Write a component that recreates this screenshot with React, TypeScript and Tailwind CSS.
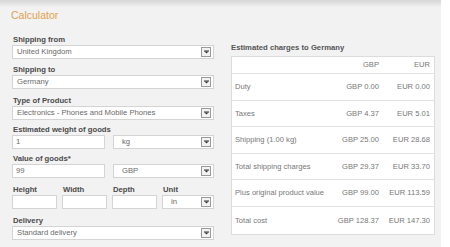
import type { ReactNode } from 'react';

const FONT = { fontFamily: '"Liberation Sans", Arial, sans-serif' };

const Arrow = () => (
    <span className="absolute right-[2px] top-[1px] w-[10px] h-[10px] border border-[#9a9a9a] bg-[#f2f2f2] flex items-center justify-center">
        <svg width="5" height="4" viewBox="0 0 5 4">
            <rect x="0" y="0.5" width="5" height="1" fill="#333" />
            <path d="M0.5 1.5 L4.5 1.5 L2.5 3.6 Z" fill="#333" />
        </svg>
    </span>
);

const Select = ({ value, className = '' }: { value: string; className?: string }) => (
    <div className={`relative h-[14px] bg-white border border-[#d4d4d4] text-[7.7px] leading-[12px] text-[#6a6a6a] pl-[4px] ${className}`}>
        {value}
        <Arrow />
    </div>
);

const Field = ({ value = '', className = '' }: { value?: string; className?: string }) => (
    <div className={`h-[14px] bg-white border border-[#d4d4d4] text-[7.7px] leading-[12px] text-[#6a6a6a] pl-[3px] ${className}`}>
        {value}
    </div>
);

const Label = ({ children, className = '' }: { children: ReactNode; className?: string }) => (
    <div className={`text-[7.7px] font-bold leading-[11px] h-[11px] text-[#4a4a4a] pl-[1px] ${className}`}>{children}</div>
);

const ROWS = [
    ['Duty', 'GBP 0.00', 'EUR 0.00'],
    ['Taxes', 'GBP 4.37', 'EUR 5.01'],
    ['Shipping (1.00 kg)', 'GBP 25.00', 'EUR 28.68'],
    ['Total shipping charges', 'GBP 29.37', 'EUR 33.70'],
    ['Plus original product value', 'GBP 99.00', 'EUR 113.59'],
    ['Total cost', 'GBP 128.37', 'EUR 147.30'],
];

export default function App() {
    return (
        <div className="w-[450px] h-[247px] bg-white overflow-hidden" style={FONT}>
            <div className="w-[441px] h-[247px] bg-[#f2f2f2] bg-gradient-to-b from-[#d6d6d6] via-[#f2f2f2] via-[3%] to-[#f2f2f2]">
                <div className="pt-[8px] pl-[11px] text-[10.5px] leading-[14px] text-[#e3a050]">Calculator</div>

                <div className="flex">
                    {/* Form */}
                    <div className="ml-[12px] w-[202px] mt-[12px]">
                        <Label>Shipping from</Label>
                        <Select value="United Kingdom" />

                        <Label className="mt-[5px]">Shipping to</Label>
                        <Select value="Germany" />

                        <Label className="mt-[6px]">Type of Product</Label>
                        <Select value="Electronics - Phones and Mobile Phones" />

                        <Label className="mt-[4px]">Estimated weight of goods</Label>
                        <div className="flex gap-[8px]">
                            <Field value="1" className="w-[93px]" />
                            <Select value="kg" className="flex-1 pl-[8px]" />
                        </div>

                        <Label className="mt-[4px]">Value of goods*</Label>
                        <div className="flex gap-[8px]">
                            <Field value="99" className="w-[93px]" />
                            <Select value="GBP" className="flex-1 pl-[8px]" />
                        </div>

                        <div className="flex gap-[5px] mt-[6px]">
                            {['Height', 'Width', 'Depth'].map((l) => (
                                <div key={l} className="w-[45px]">
                                    <Label>{l}</Label>
                                    <Field />
                                </div>
                            ))}
                            <div className="flex-1">
                                <Label>Unit</Label>
                                <Select value="in" className="pl-[8px]" />
                            </div>
                        </div>

                        <Label className="mt-[6px]">Delivery</Label>
                        <Select value="Standard delivery" />
                    </div>

                    {/* Charges */}
                    <div className="ml-[17px] w-[204px] mt-[21px]">
                        <div className="text-[7.7px] font-bold leading-[10px] text-[#555]">Estimated charges to Germany</div>
                        <div className="mt-[3px] bg-white border border-[#dcdcdc] text-[7.6px] text-[#777]">
                            <div className="flex items-center h-[17px] border-b border-[#e2e2e2] pr-[4px]">
                                <div className="flex-1" />
                                <div className="w-[60px] text-right">GBP</div>
                                <div className="w-[51px] text-right">EUR</div>
                            </div>
                            {ROWS.map(([name, gbp, eur], i) => (
                                <div
                                    key={name}
                                    className={`flex items-center h-[26.6px] pl-[3px] pr-[4px] ${i < ROWS.length - 1 ? 'border-b border-[#e2e2e2]' : ''}`}
                                >
                                    <div className="flex-1">{name}</div>
                                    <div className="w-[50px] text-right">{gbp}</div>
                                    <div className="w-[51px] text-right">{eur}</div>
                                </div>
                            ))}
                        </div>
                    </div>
                </div>
            </div>
        </div>
    );
}
